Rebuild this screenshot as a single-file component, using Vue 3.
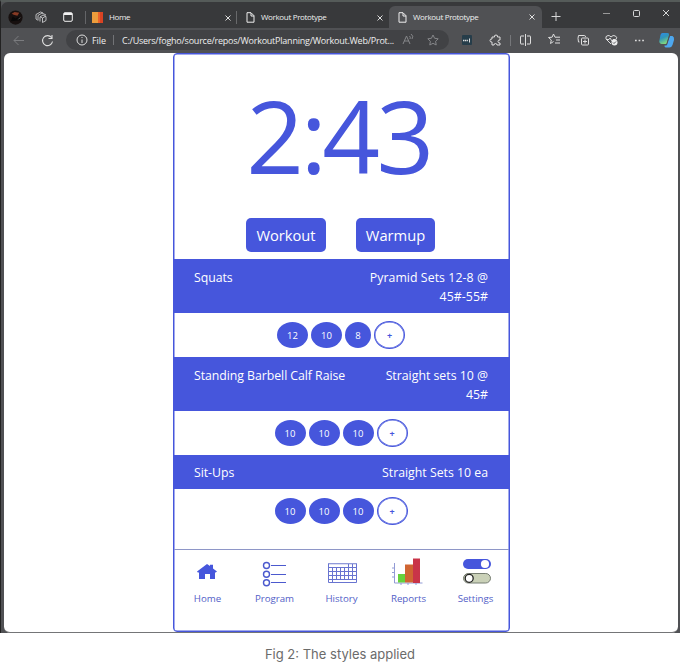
<script setup>
const exercises = [
  { name: 'Squats', plan: 'Pyramid Sets 12-8 @ 45#-55#', sets: [12, 10, 8], size: 'first' },
  { name: 'Standing Barbell Calf Raise', plan: 'Straight sets 10 @ 45#', sets: [10, 10, 10], size: 'second' },
  { name: 'Sit-Ups', plan: 'Straight Sets 10 ea', sets: [10, 10, 10], size: 'third' }
]
</script>

<template>
  <div class="figure">
    <div class="window">
      <div class="tabbar">
        <div class="tools">
          <svg class="avatar" viewBox="0 0 16 16"><circle cx="8" cy="8" r="7.6" fill="#17100f"/><path d="M4 4l3-2 5 1-2 3-4-1z" fill="#873a24"/><path d="M3 12l2-5 3 2 4-2 1 4" fill="#080808"/><path d="M11 10l2-2" stroke="#777" stroke-width=".8"/></svg>
          <svg class="cube" viewBox="0 0 12 12" fill="none" stroke="#c9cacc" stroke-width=".9"><path d="M2.500 9L1 8V3.500L5.500 1 8 2M3 9.500V4.500L7 2l4 2M5 10.500V6l3-2 3 1.500v4L7.500 11.500V7L5 5.500M7.500 7L11 5"/></svg>
          <svg class="pane" viewBox="0 0 10 10" fill="none" stroke="#f1f1f1"><rect x=".7" y=".7" width="8.600" height="8.600" rx="1.300"/><path d="M1 2h8" stroke-width="2"/></svg>
        </div>
        <div class="tab home">
          <i class="favicon"></i><span>Home</span>
          <svg class="x" viewBox="0 0 6 6"><path d="M.5.5l5 5m0-5l-5 5" stroke="#ddd" fill="none"/></svg>
        </div>
        <div class="tab middle">
          <svg class="doc" viewBox="0 0 9 11" fill="none" stroke="#eee"><path d="M1 .7h4l3 3v6.500H1zM5 1v3h3"/></svg><span>Workout Prototype</span>
          <svg class="x" viewBox="0 0 6 6"><path d="M.5.5l5 5m0-5l-5 5" stroke="#ddd" fill="none"/></svg>
        </div>
        <div class="tab active">
          <svg class="doc" viewBox="0 0 9 11" fill="none" stroke="#eee"><path d="M1 .7h4l3 3v6.500H1zM5 1v3h3"/></svg><span>Workout Prototype</span>
          <svg class="x" viewBox="0 0 6 6"><path d="M.5.5l5 5m0-5l-5 5" stroke="#ddd" fill="none"/></svg>
        </div>
        <svg class="controls" viewBox="0 0 138 26" fill="none" stroke="#d6d7d8"><path d="M9.500 14.500h9M14 10v9"/><path d="M61 11.500h7" stroke="#999"/><rect x="91.500" y="8.500" width="6" height="6" rx="1"/><path d="M121 8l6 6m0-6l-6 6"/></svg>
      </div>
      <div class="toolbar">
        <svg class="navicons" viewBox="0 0 65 25" fill="none"><path d="M13 12.500h10M17.500 8L13 12.500l4.500 4.500" stroke="#7b7c7f"/><path d="M50.500 9.500a5 5 0 1 0 1 4M51 7v3.500h-3.500" stroke="#ddd" stroke-width="1.100"/></svg>
        <div class="address">
          <svg class="info" viewBox="0 0 12 12" fill="none" stroke="#ddd"><circle cx="6" cy="6" r="5"/><path d="M6 5.500V9M6 3v1"/></svg>
          <span class="file">File</span><i class="bar"></i><span class="url">C:/Users/fogho/source/repos/WorkoutPlanning/Workout.Web/Prot...</span>
          <svg class="marks" viewBox="0 0 40 18" fill="none" stroke="#858689"><path d="M1 13L4.500 5 8 13M2.200 10h4.600M7.500 5q1.300 1 .5 3M9 3q3 2 1 5"/><path d="M31 4l1.600 3.300 3.600.5-2.600 2.500.6 3.700-3.200-1.700-3.200 1.700.6-3.700-2.600-2.500 3.600-.5z"/></svg>
        </div>
        <svg class="extensions" viewBox="0 0 231 25" fill="none" stroke="#dedede">
          <rect x="13" y="7" width="10" height="10" rx="1" fill="#263d4a" stroke="none"/><path d="M14 12.500h5" stroke-dasharray="1.300 .5" stroke-width="1.600"/><path d="M20.500 10.500v4"/>
          <path d="M43 9h2.500q-.5-2 1.500-2t1.500 2H51v3q-2-.3-2 1.500t2 1.500v2h-3q0-1.500-1.500-1.500T45 17h-2v-3q-2 .3-2-1.500t2-1.500z"/>
          <path d="M61.500 7v11" stroke="#76777a"/>
          <path d="M75 8h-3q-.5 0-.5.500v7q0 .5.500.5h3m3-8h3q.5 0 .5.500v7q0 .5-.5.500h-3M76.500 6v12"/>
          <path d="M104.500 13.500l-3 2 .8-3.500-2.800-2.500 3.600-.3L104.500 6l1.500 3.200h5M107 12h4M106 15h5"/>
          <rect x="132.500" y="10" width="7" height="7" rx="1"/><path d="M130.500 14h-1q-1-4 0-6.500h6q1 0 1 1.500M136 11.500v4m-2-2h4"/>
          <path d="M162 16l-5-5q-1-3 2-3.500 2 0 3 1.500 2-2.500 4.500-1t0 4M157 11.500h3l1-1.500 2 3 1-1.500h2"/><circle cx="165.500" cy="14.500" r="3" fill="#eee" stroke="none"/><path d="M164 14.500l1 1 2-2" stroke="#55565a"/>
          <path d="M186 12.500h9" stroke-width="1.600" stroke-dasharray="1.700 1.900"/>
          <defs><linearGradient id="ribbon" x2=".4" y2="1"><stop stop-color="#2f8bea"/><stop offset=".5" stop-color="#3095b8"/><stop offset="1" stop-color="#7fd580"/></linearGradient></defs>
          <path d="M213.500 5h5q2 0 1.500 2l-2.500 9h-5q-3-1-2-4l1-5q.5-2 2-2z" fill="url(#ribbon)" stroke="none"/><path d="M220.500 8h3q2 1 1.500 4l-1.500 5q-1 2.500-3 2.500h-4q-1.500-1-1-2h2l3-9z" fill="#4da8f0" stroke="none"/><path d="M220.500 8l-3 9" stroke="#4f5053"/>
        </svg>
      </div>
      <main class="viewport">
        <section class="phone">
          <div class="timer">2<span class="colon">:</span>43</div>
          <div class="modes"><button class="workout">Workout</button><button class="warmup">Warmup</button></div>
          <article v-for="exercise in exercises" :key="exercise.name" :class="['exercise', exercise.size]">
            <header><span>{{ exercise.name }}</span><span class="plan">{{ exercise.plan }}</span></header>
            <div class="sets"><button v-for="(reps, i) in exercise.sets" :key="i" :class="{ single: reps < 10 }">{{ reps }}</button><button class="add">+</button></div>
          </article>
          <nav>
            <a><svg viewBox="0 0 32 32"><path d="M6 15.500L16 8l3 2V8.700h3v3.700l4 3.100-1.300 1H24V23h-5v-5h-5v5H8v-6.500H6.800z" fill="#4656dc"/></svg><span>Home</span></a>
            <a><svg viewBox="0 0 32 32" fill="none" stroke="#4b59ce"><g stroke-width="1.400"><circle cx="8.500" cy="9.500" r="3"/><circle cx="8.500" cy="18.200" r="3"/><circle cx="8.500" cy="26.800" r="3"/></g><path d="M13 9.500h15M13 18.500h15M13 26.500h15" stroke-width="1.200"/></svg><span>Program</span></a>
            <a class="shifted"><svg viewBox="0 0 32 32" fill="none" stroke="#6874d0"><path d="M2.500 7.500h28v19h-28z"/><path d="M3 8h27" stroke="#bac0e5"/><path d="M3 11.500h27M3 15.500h27M3 19.500h27M3 23.500h27M6.500 11v15M10.500 11v12M14.500 11v12M18.500 11v12M22.500 8v15M26.500 8v15" /></svg><span>History</span></a>
            <a class="shifted"><svg viewBox="0 0 32 32"><path d="M1.500 7v20h28M-1 12h3M-1 16.500h3M-1 21h3M8 27v2M15 27v2M23 27v2" fill="none" stroke="#929bd5"/><path d="M5 18h7v8.500H5z" fill="#66d23c"/><path d="M12 8.500h8v18h-8z" fill="#d06532"/><path d="M20 2.500h7v24.500h-7z" fill="#c93448"/></svg><span>Reports</span></a>
            <a class="shifted"><svg viewBox="0 0 32 32"><rect x="3" y="3" width="28" height="10" rx="5" fill="#4656dc"/><circle cx="25" cy="8" r="4.100" fill="white"/><rect x="3.500" y="17.500" width="27" height="9.500" rx="4.750" fill="#cad1b8" stroke="#777e72"/><circle cx="9.200" cy="22.300" r="4" fill="white" stroke="#222" stroke-width="1.300"/></svg><span>Settings</span></a>
          </nav>
        </section>
      </main>
    </div>
    <div class="caption">Fig 2: The styles applied</div>
  </div>
</template>

<style>
body { margin: 0; background: #fff; }
</style>
<style scoped>
* { box-sizing: border-box; }
.figure { width: 680px; height: 662px; overflow: hidden; font-family: "Open Sans", "Noto Sans", sans-serif; background: white; }
.window { height: 633px; border-top: 2px solid #555b59; border-left: 1px solid #222; background: #505154; }
.tabbar { height: 26px; display: flex; background: #38393b; padding-top: 4px; border-radius: 7px 0 0; }
.tools { width: 84px; display: flex; align-items: center; flex: none; }
.avatar { width: 15px; height: 15px; margin-left: 7px; }
.cube { width: 12px; height: 12px; margin-left: 12px; }
.pane { width: 10px; height: 10px; margin-left: 16px; }
.tab { display: flex; align-items: center; font-size: 8px; color: #eee; }
.tab span { line-height: 13px; white-space: nowrap; font-weight: 500; position: relative; top: -1px; }
.home { width: 151px; border-left: 1px solid #646568; padding-left: 6px; height: 13px; margin-top: 5px; }
.favicon { width: 11px; height: 11px; background: linear-gradient(90deg, #ed9d3c 0 50%, #ec632c 50% 75%, #d94323 75%); margin-right: 6px; }
.x { width: 6px; height: 6px; margin-left: auto; }
.home .x { margin-right: 5px; }
.home span { letter-spacing: -.4px; }
.middle { width: 153px; border-left: 1px solid #68696b; padding-left: 9px; height: 13px; margin-top: 5px; }
.middle span { letter-spacing: -.33px; }
.doc { width: 9px; height: 11px; margin-right: 6px; }
.middle .x { margin-right: 6px; }
.active { width: 153px; background: #505154; border-radius: 6px 6px 0 0; padding-left: 9px; }
.active span { letter-spacing: -.33px; }
.active .x { margin-right: 7px; }
.controls { width: 138px; height: 26px; margin-top: -4px; }
.toolbar { height: 24.5px; display: flex; align-items: center; }
.navicons { width: 65px; height: 25px; flex: none; }
.address { width: 383px; height: 20px; border-radius: 10px; background: #414245; display: flex; align-items: center; color: #eee; font-size: 9px; padding-left: 10px; flex: none; }
.info { width: 12px; height: 12px; margin-right: 4px; }
.file { width: 21px; font-size: 9px; letter-spacing: -.1px; }
.bar { width: 1px; height: 10px; background: #727376; margin-right: 8px; }
.url { width: 273px; white-space: nowrap; letter-spacing: -.23px; }
.marks { width: 40px; height: 18px; margin-left: 7px; }
.extensions { width: 231px; height: 25px; }
.viewport { height: 580px; margin: 0 2px 0 3px; border-bottom: 1px solid #747577; border-radius: 6px; background: #fff; display: flex; justify-content: flex-start; }
.phone { width: 337px; height: 579.5px; margin-left: 169px; border: 1px solid #4656dc; box-shadow: inset 0 0 0 .5px #4656dc; border-radius: 4px; color: #fff; }
.timer { height: 164.500px; line-height: 162px; color: #4656dc; text-align: center; font-size: 101px; letter-spacing: -3.5px; padding-right: 6px; }
.colon { letter-spacing: -5px; }
.modes { display: flex; justify-content: center; gap: 30px; height: 41px; padding-right: 2px; }
button { font-family: inherit; color: white; background: #4656dc; border: 0; padding: 0; }
.modes button { height: 34px; border-radius: 5px; font-size: 14.7px; }
.modes .workout { width: 80px; }
.modes .warmup { width: 79px; }
.exercise header { background: #4656dc; display: flex; justify-content: space-between; padding: 9px 21px 7px 20px; font-size: 12.3px; line-height: 19px; height: 54px; letter-spacing: -.05px; }
.exercise .plan { width: 130px; text-align: right; letter-spacing: .07px; }
.second .plan { width: 112px; }
.second .plan, .third .plan { letter-spacing: 0; }
.sets { height: 44px; display: flex; justify-content: center; align-items: center; gap: 3px; padding-right: 1px; }
.sets button { width: 31px; height: 26px; border-radius: 50%; font-size: 9.500px; }
.sets .single { width: 26px; }
.sets .add { width: 31px; height: 28px; border: 1px solid #4656dc; box-shadow: inset 0 0 0 .5px #4656dc; color: #4656dc; background: white; font-size: 9px; font-weight: 700; }
.exercise.third header { height: 34px; padding-top: 8px; }
nav { display: grid; grid-template-columns: repeat(5, 67px); border-top: 1px solid #8e96c7; height: 82px; margin-top: 16px; padding-top: 6px; }
nav a { display: flex; flex-direction: column; align-items: center; color: #5360c7; font-size: 9.700px; letter-spacing: -.03px; }
nav svg { width: 32px; height: 32px; position: relative; left: -1px; overflow: visible; }
nav .shifted svg { left: 0; }
nav span { line-height: 16px; margin-top: 3px; }
.caption { color: #6b6b6b; font-family: Inter, "Liberation Sans", sans-serif; text-align: center; font-size: 13px; line-height: 18px; margin-top: 12px; }
</style>
